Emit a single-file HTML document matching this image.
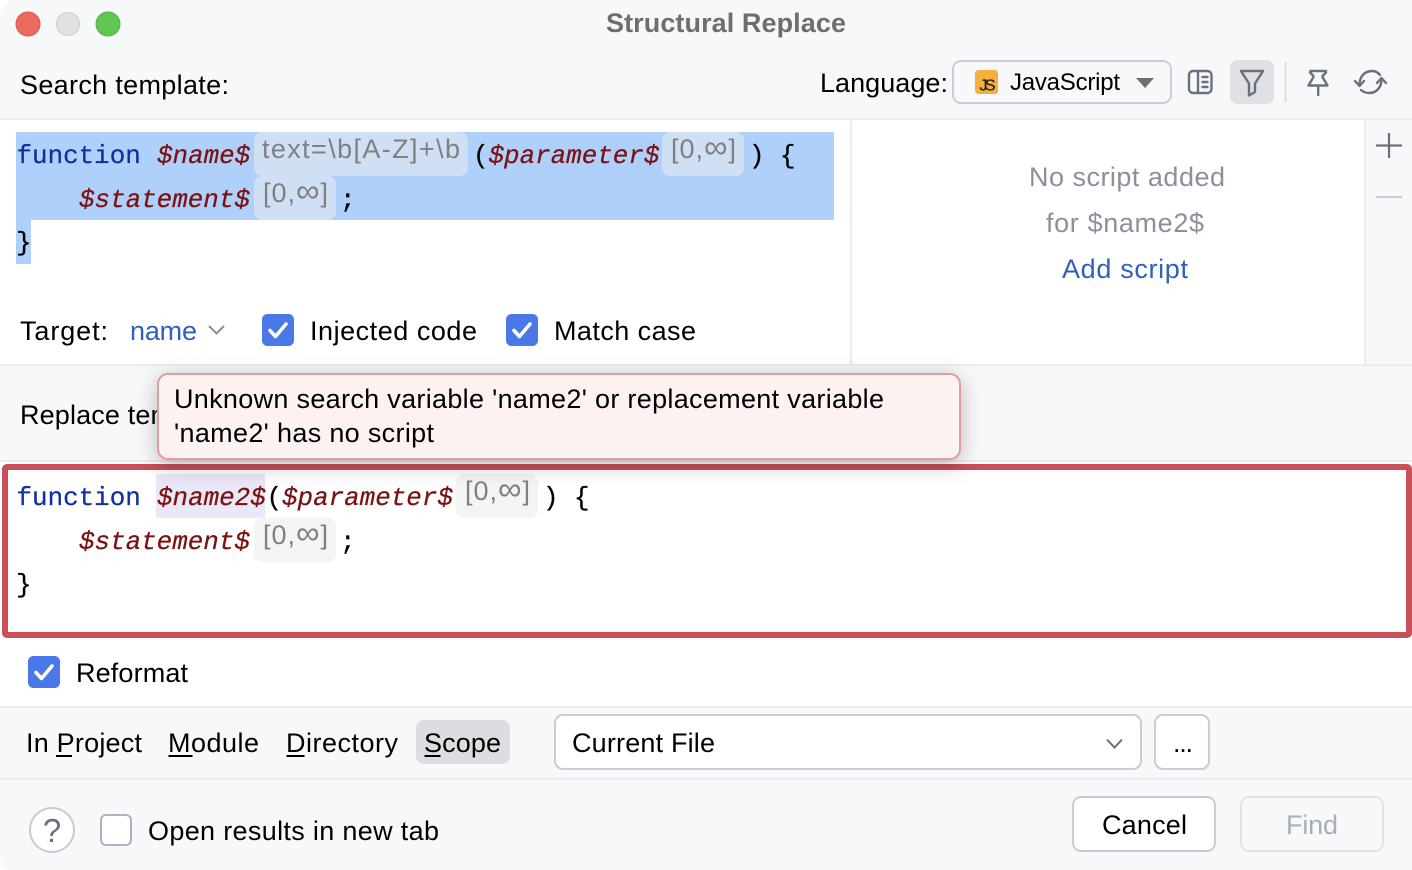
<!DOCTYPE html>
<html><head><meta charset="utf-8"><title>Structural Replace</title>
<style>
html,body{margin:0;padding:0;background:#fff;overflow:hidden}
svg{display:block}
.s{font-family:"Liberation Sans",sans-serif;font-size:27px;fill:#000}
.m{font-family:"Liberation Mono",monospace;font-size:25.900px;fill:#000;stroke:#000;stroke-width:.25}
.k{fill:#0f319c;stroke:#0f319c}
.v{fill:#7a1212;stroke:#7a1212;font-style:italic}
.c{font-family:"Liberation Sans",sans-serif;font-size:27px;fill:#808080}
.inf{font-size:33px}
.i{fill:none;stroke:#6c707e;stroke-width:2.400;stroke-linejoin:round;stroke-linecap:round}
</style></head><body>
<svg width="1412" height="870" viewBox="0 0 1412 870" xmlns="http://www.w3.org/2000/svg">
<defs>
<filter id="sh" filterUnits="userSpaceOnUse" x="100" y="330" width="920" height="190"><feGaussianBlur stdDeviation="11"/></filter>
<g id="chk"><rect width="32" height="32" rx="5.500" fill="#4a78e8"/><path d="M8 16.500l5.500 6L24 10" fill="none" stroke="#fff" stroke-width="3.600" stroke-linecap="round" stroke-linejoin="round"/></g>
</defs>
<rect width="1412" height="870" fill="#ffffff"/>
<rect x="0" y="-1" width="1430" height="874" rx="18" fill="#f7f8fa"/>

<!-- title bar -->
<circle cx="28" cy="24" r="12" fill="#ee6a5f" stroke="#d9574c" stroke-width="1"/>
<circle cx="68" cy="24" r="11.500" fill="#e1e1e1" stroke="#cdcdcd" stroke-width="1"/>
<circle cx="108" cy="24" r="12" fill="#61c554" stroke="#55b148" stroke-width="1"/>
<text class="s" x="606" y="32" textLength="240" style="font-weight:bold;fill:#6e6e6e">Structural Replace</text>

<text class="s" x="20" y="94" textLength="209">Search template:</text>
<text class="s" x="820" y="92" textLength="128">Language:</text>
<rect x="953" y="61" width="218" height="42" rx="8" fill="#f7f8fa" stroke="#c9ccd6" stroke-width="2"/>
<rect x="975" y="70" width="23" height="24" rx="3.500" fill="#f4af3d"/>
<text x="979.500" y="90.500" style="font-family:'Liberation Sans',sans-serif;font-size:16px;fill:#231f20;stroke:#231f20;stroke-width:.3" textLength="16">JS</text>
<text class="s" x="1010" y="90" textLength="110" style="font-size:24px">JavaScript</text>
<path d="M1136 78h18l-9 10z" fill="#6e6e6e"/>

<rect x="1189" y="71" width="22.500" height="22" rx="4" class="i"/>
<path class="i" d="M1198 71v22M1202.500 77h5M1202.500 82h5M1202.500 87h5"/>
<rect x="1230" y="60" width="44" height="44" rx="8" fill="#dfe0e3"/>
<path class="i" d="M1241 71h22l-8 12.500v8.500l-6 3.500v-12z"/>
<rect x="1284.500" y="62" width="2" height="40" fill="#dcdee3"/>
<path class="i" d="M1310.500 71h15.500v1.500l-3.500 3.500v1l5 8.500h-19l5-8.500v-1l-3.500-3.500zM1318.200 86v9"/>
<path class="i" d="M1359.500 85C1359.500 76 1365 71 1372 71C1375 71 1378 72.500 1380 75M1381.500 79C1381.500 88 1376 93 1369 93C1366 93 1363.500 92 1361 90"/>
<path class="i" d="M1355 81l4.500 5 4.500-5M1377 83l4.500-5 4.500 5"/>

<!-- top editor -->
<rect x="0" y="118" width="1412" height="2" fill="#ebecf0"/>
<rect x="0" y="120" width="1365" height="244" fill="#ffffff"/>
<rect x="850" y="120" width="2" height="244" fill="#ebecf0"/>
<rect x="1364" y="120" width="2" height="244" fill="#ebecf0"/>
<rect x="16" y="132" width="818" height="88" fill="#afd0fb"/>
<rect x="16" y="220" width="15" height="44" fill="#afd0fb"/>
<rect x="254" y="132" width="214" height="44" rx="8" fill="#cfdff4"/>
<rect x="662" y="132" width="82" height="44" rx="8" fill="#cfdff4"/>
<rect x="254" y="176" width="82" height="44" rx="8" fill="#cfdff4"/>
<text class="m k" x="16.500" y="163">function</text>
<text class="m v" x="157" y="163">$name$</text>
<text class="c" x="262" y="158" textLength="198">text=\b[A-Z]+\b</text>
<text class="m" x="473" y="163">(</text>
<text class="m v" x="488.500" y="163">$parameter$</text>
<text class="c" x="671" y="158" textLength="65">[0,<tspan class="inf">∞</tspan>]</text>
<text class="m" x="749" y="163">)</text>
<text class="m" x="780" y="163">{</text>
<text class="m v" x="79" y="207">$statement$</text>
<text class="c" x="263" y="202" textLength="65">[0,<tspan class="inf">∞</tspan>]</text>
<text class="m" x="340" y="207">;</text>
<text class="m" x="16" y="250">}</text>

<text class="s" x="20" y="340" textLength="88">Target:</text>
<text class="s" x="130" y="340" textLength="67" style="fill:#315fbd">name</text>
<path d="M209 326l7.500 7.500 7.500-7.500" fill="none" stroke="#8a8d99" stroke-width="2"/>
<use href="#chk" x="262" y="314"/>
<text class="s" x="310" y="340" textLength="167">Injected code</text>
<use href="#chk" x="506" y="314"/>
<text class="s" x="554" y="340" textLength="142">Match case</text>

<!-- right panel -->
<text class="s" x="1029" y="186" textLength="196" style="fill:#8c8f9d">No script added</text>
<text class="s" x="1046" y="232" textLength="158" style="fill:#8c8f9d">for $name2$</text>
<text class="s" x="1062" y="278" textLength="126" style="fill:#315fbd">Add script</text>
<path d="M1376 145.500h26M1389 133v25" stroke="#6c707e" stroke-width="2.200" fill="none"/>
<path d="M1376 197h26" stroke="#c9ccd6" stroke-width="2" fill="none"/>

<!-- replace row -->
<rect x="0" y="364" width="1412" height="2" fill="#ebecf0"/>
<text class="s" x="20" y="424" textLength="220">Replace template:</text>
<rect x="0" y="460" width="1412" height="2" fill="#ebecf0"/>

<!-- replace editor -->
<rect x="0" y="462" width="1412" height="244" fill="#ffffff"/>
<rect x="5" y="467" width="1404" height="168" rx="2" fill="#fff" stroke="#c94f58" stroke-width="6"/>
<rect x="156" y="474" width="109" height="44" fill="#e9e7f8"/>
<rect x="456" y="474" width="82" height="44" rx="8" fill="#f4f4f4"/>
<rect x="254" y="518" width="82" height="44" rx="8" fill="#f4f4f4"/>
<text class="m k" x="16.500" y="505">function</text>
<text class="m v" x="157" y="505">$name2$</text>
<text class="m" x="266.500" y="505">(</text>
<text class="m v" x="282" y="505">$parameter$</text>
<text class="c" x="465" y="500" textLength="65">[0,<tspan class="inf">∞</tspan>]</text>
<text class="m" x="543" y="505">)</text>
<text class="m" x="574" y="505">{</text>
<text class="m v" x="79" y="549">$statement$</text>
<text class="c" x="263" y="544" textLength="65">[0,<tspan class="inf">∞</tspan>]</text>
<text class="m" x="340" y="549">;</text>
<text class="m" x="16" y="592">}</text>

<!-- popup -->
<rect x="158" y="378" width="802" height="87" rx="10" fill="#000" fill-opacity=".28" filter="url(#sh)"/>
<rect x="158" y="374" width="802" height="85" rx="10" fill="#fdf2f2" stroke="#e29da3" stroke-width="2"/>
<text class="s" x="174" y="408" textLength="710">Unknown search variable 'name2' or replacement variable</text>
<text class="s" x="174" y="442" textLength="260">'name2' has no script</text>

<use href="#chk" x="28" y="656"/>
<text class="s" x="76" y="682" textLength="112">Reformat</text>

<!-- scope row -->
<rect x="0" y="706" width="1412" height="74" fill="#f7f8fa"/>
<rect x="0" y="706" width="1412" height="2" fill="#ebecf0"/>
<rect x="0" y="778" width="1412" height="2" fill="#ebecf0"/>
<text class="s" x="26" y="752" textLength="116">In Project</text>
<rect x="56" y="755" width="16" height="2" fill="#000"/>
<text class="s" x="168" y="752" textLength="91">Module</text>
<rect x="168.500" y="755" width="24" height="2" fill="#000"/>
<text class="s" x="286" y="752" textLength="112">Directory</text>
<rect x="286.500" y="755" width="18" height="2" fill="#000"/>
<rect x="416" y="720" width="94" height="44" rx="8" fill="#dcdde0"/>
<text class="s" x="424" y="752" textLength="77">Scope</text>
<rect x="424.500" y="755" width="16" height="2" fill="#000"/>
<rect x="555" y="715" width="586" height="54" rx="8" fill="#fff" stroke="#c9ccd6" stroke-width="2"/>
<text class="s" x="572" y="752" textLength="143">Current File</text>
<path d="M1107 739.500l7.500 8 7.500-8" fill="none" stroke="#6c707e" stroke-width="2"/>
<rect x="1155" y="715" width="54" height="54" rx="8" fill="#fff" stroke="#c9ccd6" stroke-width="2"/>
<text class="s" x="1173" y="752" textLength="20">...</text>

<!-- footer -->
<circle cx="52" cy="830" r="22" fill="#fff" stroke="#c9ccd6" stroke-width="2"/>
<text x="52" y="842" text-anchor="middle" style="font-family:'Liberation Sans',sans-serif;font-size:33px;fill:#6c707e">?</text>
<rect x="101" y="815" width="30" height="30" rx="5" fill="#fff" stroke="#aeb1c2" stroke-width="2"/>
<text class="s" x="148" y="840" textLength="291">Open results in new tab</text>
<rect x="1073" y="797" width="142" height="54" rx="8" fill="#fff" stroke="#c9ccd6" stroke-width="2"/>
<text class="s" x="1102" y="834" textLength="85">Cancel</text>
<rect x="1241" y="797" width="142" height="54" rx="8" fill="#f7f8fa" stroke="#e1e3e8" stroke-width="2"/>
<text class="s" x="1286" y="834" textLength="52" style="fill:#a8adbd">Find</text>
</svg>
</body></html>
